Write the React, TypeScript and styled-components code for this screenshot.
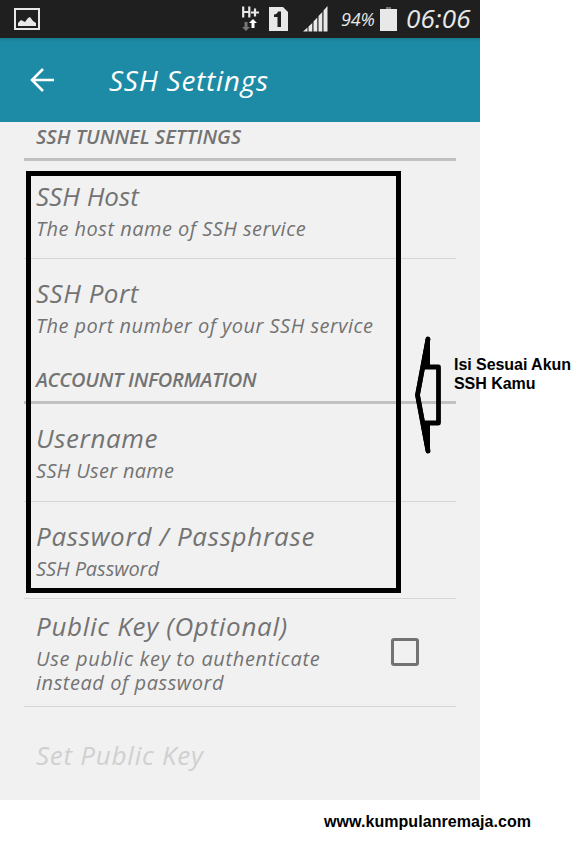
import React from 'react';
import styled, { createGlobalStyle } from 'styled-components';

const GlobalStyle = createGlobalStyle`
  body { margin: 0; background: #fff; }
  * { box-sizing: border-box; }
`;

const hand = `'Open Sans', 'Noto Sans', sans-serif`;

const Page = styled.div`
  position: relative;
  width: 584px;
  height: 846px;
  overflow: hidden;
  background: #fff;
`;

const Phone = styled.main`
  display: flex;
  flex-direction: column;
  width: 480px;
  height: 800px;
  background: #f1f1f1;
  color: #737373;
  font-family: ${hand};
  font-style: italic;
  white-space: nowrap;
`;

const StatusBar = styled.div`
  display: flex;
  align-items: center;
  justify-content: space-between;
  height: 38px;
  flex: none;
  padding: 0 9px 0 14px;
  background: #1f1f1f;
  color: #e8e8e8;
`;

const StatusGroup = styled.div`
  display: flex;
  align-items: center;
  height: 38px;
`;

const StatusIcon = styled.svg<{ $gap?: number }>`
  display: block;
  flex: none;
  margin-right: ${p => p.$gap ?? 0}px;
`;

const BatteryLevel = styled.span`
  width: 39px;
  font-size: 18px;
  line-height: 38px;
  letter-spacing: -0.2px;
`;

const Clock = styled.span`
  width: 65px;
  font-size: 26px;
  line-height: 34px;
  padding-bottom: 2px;
  letter-spacing: 0.2px;
`;

const AppBar = styled.header`
  display: flex;
  align-items: center;
  flex: none;
  height: 84px;
  padding: 0 29px;
  background: linear-gradient(#197b92 0, #1d8ba5 4px);
  color: #fff;
`;

const Title = styled.h1`
  margin: 0 0 0 53px;
  font-size: 28px;
  font-weight: 500;
  line-height: 36px;
  letter-spacing: 0.75px;
`;

const Settings = styled.div`
  display: flex;
  flex-direction: column;
  padding: 0 24px;
`;

const SectionTitle = styled.h2<{ $height: number; $spacing: number }>`
  display: flex;
  align-items: flex-end;
  height: ${p => p.$height}px;
  margin: 0;
  padding: 0 12px 9px;
  border-bottom: 3px solid #c1c1c1;
  font-size: 20px;
  font-weight: 600;
  line-height: 24px;
  letter-spacing: ${p => p.$spacing}px;
`;

const Row = styled.div<{ $height: number; $top?: number; $last?: boolean }>`
  display: flex;
  justify-content: space-between;
  height: ${p => p.$height}px;
  padding: ${p => p.$top ?? 18}px 37px 0 12px;
  border-bottom: ${p => (p.$last ? 'none' : '1px solid #d6d6d6')};
`;

const RowText = styled.div`
  display: flex;
  flex-direction: column;
  gap: 5px;
`;

const Label = styled.div<{ $spacing?: number; $disabled?: boolean }>`
  font-size: 26px;
  line-height: 32px;
  letter-spacing: ${p => p.$spacing ?? 0}px;
  color: ${p => (p.$disabled ? '#d0d0d0' : 'inherit')};
`;

const Summary = styled.div`
  font-size: 20px;
  line-height: 24px;
`;

const SummaryLine = styled.span<{ $spacing?: number }>`
  display: block;
  letter-spacing: ${p => p.$spacing ?? 0}px;
`;

const Checkbox = styled.span`
  width: 28px;
  height: 28px;
  margin-top: 28px;
  border: 3px solid #737373;
  border-radius: 3px;
`;

const Highlight = styled.div`
  position: absolute;
  left: 26px;
  top: 171px;
  width: 375px;
  height: 422px;
  border: 5px solid #000;
`;

const Pointer = styled.svg`
  position: absolute;
  left: 410px;
  top: 330px;
`;

const Note = styled.div`
  position: absolute;
  left: 454px;
  top: 355px;
  color: #000;
  font: bold 16px/19px 'Liberation Sans', Arial, sans-serif;
  letter-spacing: -0.05px;
  white-space: nowrap;
`;

const Credit = styled.footer`
  padding: 12px 0 0 324px;
  color: #000;
  font: bold 16px/19px 'Liberation Sans', Arial, sans-serif;
  letter-spacing: 0.06px;
`;

const PictureIcon = () => (
  <StatusIcon width="26" height="22" viewBox="0 0 26 22">
    <rect x="1" y="1" width="24" height="20" fill="none" stroke="#e8e8e8" strokeWidth="2" />
    <path d="M4 18v-3l3-3 2 1 2 1 3-4 2-1 3 4 3 2v3z" fill="#e8e8e8" />
  </StatusIcon>
);

const DataIcon = () => (
  <StatusIcon width="17" height="26" viewBox="0 0 17 26" $gap={10}>
    <path d="M1.200 0.500v11M7.300 0.500v11M1 6h6.500M9 6.500h8M13 2.500v8" fill="none" stroke="#e8e8e8" strokeWidth="2.200" />
    <path d="M2.500 16h3v5H8l-4 4-4-4h2.500z" fill="#777" />
    <path d="M9.500 22v-5H7l4-4 4 4h-2.500v5z" fill="#fff" />
  </StatusIcon>
);

const SimIcon = () => (
  <StatusIcon width="19" height="24" viewBox="0 0 19 24" $gap={15}>
    <path d="M0 0h14l5 5v19H0z" fill="#e8e8e8" />
    <path d="M5 7.500c2 0 3.500-1 4-3h3V20H8.500V10H5z" fill="#1f1f1f" />
  </StatusIcon>
);

const SignalIcon = () => (
  <StatusIcon width="25" height="26" viewBox="0 0 25 26" $gap={13}>
    <path
      d="M0 25.500l4.500-4v4zM5.500 20.500l3.800-3.500v8.500H5.500zM10.500 15.500l3.800-4v14h-3.800zM15.500 10l3.800-4v19.500h-3.800zM20.500 4.500L24.500 0v25.500h-4z"
      fill="#e8e8e8"
    />
  </StatusIcon>
);

const BatteryIcon = () => (
  <StatusIcon width="17" height="24" viewBox="0 0 17 24" $gap={9}>
    <path d="M6 0h5v2H6z" fill="#737373" />
    <path d="M0 2h17v22H0z" fill="#e8e8e8" />
  </StatusIcon>
);

const BackIcon = () => (
  <StatusIcon width="27" height="24" viewBox="0 0 27 24">
    <path d="M25 12H4M14 1L3 12l11 11" fill="none" stroke="#fff" strokeWidth="2.600" />
  </StatusIcon>
);

export default function App() {
  return (
    <>
      <GlobalStyle />
      <Page>
        <Phone>
          <StatusBar>
            <PictureIcon />
            <StatusGroup>
              <DataIcon />
              <SimIcon />
              <SignalIcon />
              <BatteryLevel>94%</BatteryLevel>
              <BatteryIcon />
              <Clock>06:06</Clock>
            </StatusGroup>
          </StatusBar>
          <AppBar>
            <BackIcon />
            <Title>SSH Settings</Title>
          </AppBar>
          <Settings>
            <SectionTitle $height={39} $spacing={0.02}>SSH TUNNEL SETTINGS</SectionTitle>
            <Row $height={98} $top={19}>
              <RowText>
                <Label>SSH Host</Label>
                <Summary><SummaryLine $spacing={0.48}>The host name of SSH service</SummaryLine></Summary>
              </RowText>
            </Row>
            <Row $height={97} $last>
              <RowText>
                <Label $spacing={0.5}>SSH Port</Label>
                <Summary><SummaryLine $spacing={0.48}>The port number of your SSH service</SummaryLine></Summary>
              </RowText>
            </Row>
            <SectionTitle $height={48} $spacing={-0.27}>ACCOUNT INFORMATION</SectionTitle>
            <Row $height={98}>
              <RowText>
                <Label $spacing={0.6}>Username</Label>
                <Summary><SummaryLine $spacing={0.3}>SSH User name</SummaryLine></Summary>
              </RowText>
            </Row>
            <Row $height={97}>
              <RowText>
                <Label $spacing={0.72}>Password / Passphrase</Label>
                <Summary><SummaryLine $spacing={-0.08}>SSH Password</SummaryLine></Summary>
              </RowText>
            </Row>
            <Row $height={108} $top={11}>
              <RowText>
                <Label $spacing={0.7}>Public Key (Optional)</Label>
                <Summary>
                  <SummaryLine $spacing={0.66}>Use public key to authenticate</SummaryLine>
                  <SummaryLine $spacing={0.55}>instead of password</SummaryLine>
                </Summary>
              </RowText>
              <Checkbox />
            </Row>
            <Row $height={93} $top={32} $last>
              <Label $spacing={0.75} $disabled>Set Public Key</Label>
            </Row>
          </Settings>
        </Phone>
        <Credit>www.kumpulanremaja.com</Credit>
        <Highlight />
        <Pointer width="36" height="130" viewBox="0 0 36 130">
          <path
            d="M18 9L13 37H28.500V93H13L18 121L7.500 65Z"
            fill="none"
            stroke="#000"
            strokeWidth="4.800"
            strokeLinejoin="round"
          />
          <path d="M18 9L13 36H18ZM18 121L13 94H18Z" stroke="#000" strokeWidth="4" strokeLinejoin="round" />
          <path d="M18 9L7.500 65L18 121" fill="none" stroke="#000" strokeWidth="4.500" strokeLinecap="round" />
        </Pointer>
        <Note>Isi Sesuai Akun<br />SSH Kamu</Note>
      </Page>
    </>
  );
}
